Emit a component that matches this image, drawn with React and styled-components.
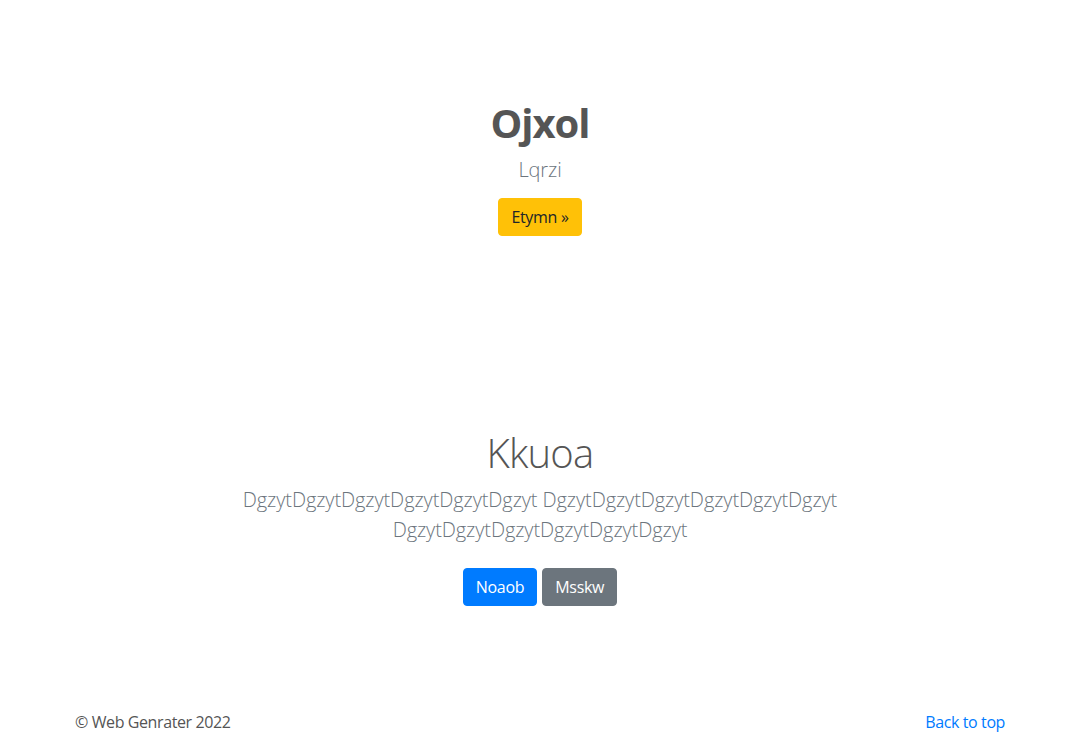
import styled, { createGlobalStyle } from "styled-components";

const GlobalStyle = createGlobalStyle`
  body {
    margin: 0;
    background: #fff;
    font-family: "Segoe UI", "Open Sans", "Noto Sans", sans-serif;
    font-size: 16px;
    line-height: 1.5;
    color: #212529;
  }
`;

const Page = styled.div`
  min-height: 734px;
  display: flex;
  flex-direction: column;
`;

const Hero = styled.section`
  display: flex;
  flex-direction: column;
  align-items: center;
  text-align: center;
  padding: ${(p) => p.$pad};
`;

const Title = styled.h1`
  margin: 0 0 8px;
  font-size: 40px;
  line-height: 1.2;
  font-weight: ${(p) => (p.$light ? 300 : 700)};
  letter-spacing: ${(p) => (p.$light ? "-0.8px" : "-1px")};
  color: #555;
`;

const Lead = styled.p`
  margin: 0 0 ${(p) => p.$mb}px;
  max-width: 610px;
  font-size: 20px;
  line-height: 1.5;
  font-weight: 300;
  letter-spacing: -0.1px;
  color: #6c757d;
`;

const Actions = styled.div`
  display: flex;
  gap: 5px;
  justify-content: center;
`;

const Button = styled.a`
  display: inline-block;
  padding: 6px 12px;
  font-size: 16px;
  line-height: 1.5;
  letter-spacing: -0.3px;
  border-radius: 4px;
  border: 1px solid ${(p) => p.$bg};
  background: ${(p) => p.$bg};
  color: ${(p) => p.$fg};
  text-decoration: none;
  cursor: pointer;
`;

const Footer = styled.footer`
  margin-top: auto;
  width: 930px;
  align-self: center;
  display: flex;
  justify-content: space-between;
  color: #555;
  letter-spacing: -0.4px;
`;

const TopLink = styled.a`
  color: #007bff;
  text-decoration: none;
`;

export default function App() {
  return (
    <Page>
      <GlobalStyle />
      <Hero $pad="99px 0 0">
        <Title>Ojxol</Title>
        <Lead $mb={13}>Lqrzi</Lead>
        <Button $bg="#ffc107" $fg="#212529">Etymn »</Button>
      </Hero>
      <Hero $pad="193px 0 0">
        <Title $light>Kkuoa</Title>
        <Lead $mb={23}>
          DgzytDgzytDgzytDgzytDgzytDgzyt DgzytDgzytDgzytDgzytDgzytDgzyt
          DgzytDgzytDgzytDgzytDgzytDgzyt
        </Lead>
        <Actions>
          <Button $bg="#007bff" $fg="#fff">Noaob</Button>
          <Button $bg="#6c757d" $fg="#fff">Msskw</Button>
        </Actions>
      </Hero>
      <Footer>
        <span>© Web Genrater 2022</span>
        <TopLink href="#">Back to top</TopLink>
      </Footer>
    </Page>
  );
}
